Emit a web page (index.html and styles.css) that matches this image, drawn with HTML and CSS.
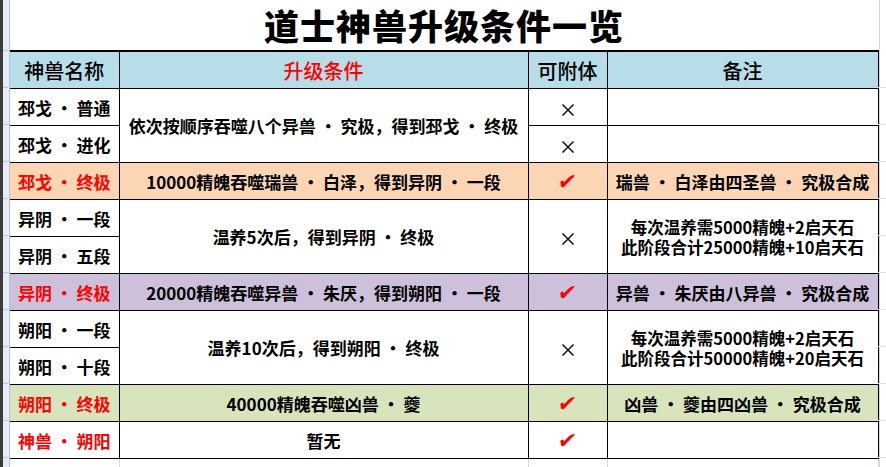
FILE: index.html
```html
<!DOCTYPE html>
<html lang="zh-CN">
<head>
<meta charset="utf-8">
<title>道士神兽升级条件一览</title>
<link rel="stylesheet" href="styles.css">
</head>
<body>
<div class="page">
  <div class="rowhdr"><div class="edge"></div><div class="heads"></div></div>
  <div class="sheet">
    <div class="title">道士神兽升级条件一览</div>
    <table class="grid">
      <colgroup><col class="w1"><col class="w2"><col class="w3"><col class="w4"></colgroup>
      <tr class="head"><th>神兽名称</th><th class="red">升级条件</th><th>可附体</th><th>备注</th></tr>
      <tr>
        <td>邳戈 · 普通</td>
        <td rowspan="2">依次按顺序吞噬八个异兽 · 究极，得到邳戈 · 终极</td>
        <td><svg class="x" viewBox="0 0 14 14"><path d="M1.5 1.5L12.5 12.5M12.5 1.5L1.5 12.5"/></svg></td>
        <td></td>
      </tr>
      <tr>
        <td>邳戈 · 进化</td>
        <td><svg class="x" viewBox="0 0 14 14"><path d="M1.5 1.5L12.5 12.5M12.5 1.5L1.5 12.5"/></svg></td>
        <td></td>
      </tr>
      <tr class="peach">
        <td class="red">邳戈 · 终极</td>
        <td>10000精魄吞噬瑞兽 · 白泽，得到异阴 · 一段</td>
        <td><span class="ok">✔</span></td>
        <td>瑞兽 · 白泽由四圣兽 · 究极合成</td>
      </tr>
      <tr>
        <td>异阴 · 一段</td>
        <td rowspan="2">温养5次后，得到异阴 · 终极</td>
        <td rowspan="2"><svg class="x" viewBox="0 0 14 14"><path d="M1.5 1.5L12.5 12.5M12.5 1.5L1.5 12.5"/></svg></td>
        <td rowspan="2" class="two"><div class="ln">每次温养需5000精魄+2启天石</div><div class="ln">此阶段合计25000精魄+10启天石</div></td>
      </tr>
      <tr><td>异阴 · 五段</td></tr>
      <tr class="lav">
        <td class="red">异阴 · 终极</td>
        <td>20000精魄吞噬异兽 · 朱厌，得到朔阳 · 一段</td>
        <td><span class="ok">✔</span></td>
        <td>异兽 · 朱厌由八异兽 · 究极合成</td>
      </tr>
      <tr>
        <td>朔阳 · 一段</td>
        <td rowspan="2">温养10次后，得到朔阳 · 终极</td>
        <td rowspan="2"><svg class="x" viewBox="0 0 14 14"><path d="M1.5 1.5L12.5 12.5M12.5 1.5L1.5 12.5"/></svg></td>
        <td rowspan="2" class="two"><div class="ln">每次温养需5000精魄+2启天石</div><div class="ln">此阶段合计50000精魄+20启天石</div></td>
      </tr>
      <tr><td>朔阳 · 十段</td></tr>
      <tr class="green">
        <td class="red">朔阳 · 终极</td>
        <td>40000精魄吞噬凶兽 · 夔</td>
        <td><span class="ok">✔</span></td>
        <td>凶兽 · 夔由四凶兽 · 究极合成</td>
      </tr>
      <tr>
        <td class="red">神兽 · 朔阳</td>
        <td>暂无</td>
        <td><span class="ok">✔</span></td>
        <td></td>
      </tr>
      <tr class="ghost"><td></td><td></td><td></td><td></td></tr>
    </table>
  </div>
  <div class="rightgap"></div>
</div>
</body>
</html>
```

FILE: styles.css
```css
html, body {
  margin: 0;
  padding: 0;
  background: #ffffff;
}
.page {
  display: flex;
  width: 886px;
  height: 467px;
  overflow: hidden;
  font-family: "Noto Sans CJK SC", "Noto Sans", sans-serif;
  color: #000;
}
.rowhdr {
  display: flex;
  width: 10px;
  flex: none;
}
.edge {
  width: 3px;
  background: #3b3b3b;
}
.heads {
  width: 6px;
  border-right: 1px solid #b3c3da;
  background-color: #e6edf7;
  background-image: repeating-linear-gradient(to bottom, #b8c7dc 0 1px, transparent 1px 37px);
  background-position: 0 50px;
  background-size: 100% 420px;
  background-repeat: no-repeat;
}
.sheet {
  width: 868px;
  flex: none;
}
.rightgap {
  width: 8px;
  flex: none;
  background-image:
    linear-gradient(to right, transparent 0 1px, #d3d8e6 1px 2px, transparent 2px),
    repeating-linear-gradient(to bottom, #dde1ea 0 1px, transparent 1px 37px);
  background-position: 0 0, 0 87px;
  background-size: 100% 100%, 100% 400px;
  background-repeat: no-repeat;
}
.title {
  height: 50px;
  display: flex;
  align-items: center;
  justify-content: center;
  font-size: 35px;
  line-height: 50px;
  font-weight: 900;
  letter-spacing: 1px;
}
.grid {
  border-collapse: collapse;
  table-layout: fixed;
  width: 868px;
}
.w1 { width: 109px; }
.w2 { width: 409px; }
.w3 { width: 79px; }
.w4 { width: 271px; }
.grid th, .grid td {
  border: 1px solid #000;
  padding: 0;
  text-align: center;
  vertical-align: middle;
  height: 36px;
  font-size: 17px;
  font-weight: 700;
  white-space: nowrap;
  overflow: hidden;
}
.grid tr { height: 37px; }
.head th {
  background: #b7dde8;
  font-size: 20px;
  font-weight: 500;
  border-top: 2px solid #000;
}
.grid td:first-child, .grid th:first-child { border-left: none; }
.red { color: #ff0000; }
.peach td { background: #fcd5b4; }
.lav td { background: #ccc0da; }
.green td { background: #d8e4bc; }
.two { line-height: 20px; }
.ln {
  height: 20px;
  line-height: 20px;
  font-size: 16.5px;
}
.x {
  width: 14px;
  height: 14px;
  display: inline-block;
  vertical-align: middle;
  fill: none;
  stroke: #111;
  stroke-width: 1.5;
}
.ok {
  color: #ff0000;
  font-family: "DejaVu Sans", sans-serif;
  font-size: 22px;
  font-weight: 700;
  line-height: 22px;
  display: inline-block;
  transform: skewX(-8deg);
}
.ghost td {
  height: 12px;
  border: 1px solid #d4d7de;
  border-left: none;
  border-bottom: none;
}
.grid tr.ghost { height: 12px; }
```
